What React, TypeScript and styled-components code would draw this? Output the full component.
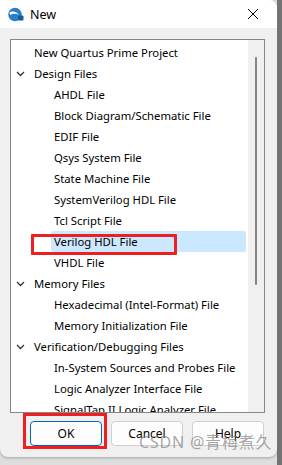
import React from "react";
import styled, { createGlobalStyle } from "styled-components";

const Global = createGlobalStyle`
  html, body { margin: 0; padding: 0; }
  body { background: #dedede; font-family: "Noto Sans", "Open Sans", sans-serif; }
`;

const Page = styled.div`
  display: flex;
  width: 282px;
  height: 465px;
  overflow: hidden;
  position: relative;
`;

const WindowCol = styled.div`
  display: flex;
  flex-direction: column;
  width: 277px;
  height: 465px;
`;

const Win = styled.div`
  display: flex;
  flex-direction: column;
  width: 277px;
  height: 457px;
  background: #f0f0f0;
  border-radius: 0 8px 8px 8px;
  overflow: hidden;
  box-shadow: 0 1px 3px rgba(0, 0, 0, 0.25);
`;

const RightStrip = styled.div`
  width: 5px;
  height: 465px;
  background: #737373;
`;

const TitleBar = styled.div`
  display: flex;
  align-items: center;
  height: 28px;
  background: #ffffff;
  padding: 0 0 0 7px;
`;

const TitleText = styled.span`
  margin-left: 6px;
  font-family: "Noto Sans", sans-serif;
  font-size: 12.5px;
  color: #000;
  flex: 1;
`;

const CloseBtn = styled.div`
  width: 40px;
  display: flex;
  justify-content: center;
  align-items: center;
  margin-right: 4px;
`;

const Body = styled.div`
  display: flex;
  flex-direction: column;
  padding: 11px 12px 0 10px;
`;

const TreeBox = styled.div`
  display: flex;
  height: 372px;
  border: 1px solid #828790;
  background: #ffffff;
  overflow: hidden;
`;

const TreeList = styled.div`
  flex: 1;
  display: flex;
  flex-direction: column;
  padding-top: 2px;
`;

const Row = styled.div<{ $level: number; $selected?: boolean }>`
  display: flex;
  align-items: center;
  height: 21px;
  flex: none;
  padding-left: ${(p) => (p.$selected ? 3 : p.$level === 0 ? 3 : 43)}px;
  margin-left: ${(p) => (p.$selected ? 40 : 0)}px;
  margin-right: 2px;
  border-radius: 2px;
  background: ${(p) => (p.$selected ? "#cce8ff" : "transparent")};
  font-family: "Noto Sans", sans-serif;
  font-size: 11.3px;
  color: #000;
  white-space: nowrap;
  position: relative;
`;

const Chevron = styled.span`
  width: 20px;
  display: flex;
  align-items: center;
  justify-content: flex-start;
  padding-left: 2px;
  box-sizing: border-box;
  flex: none;
`;

const RedMark = styled.div`
  position: absolute;
  left: -20px;
  top: 3px;
  width: 140px;
  height: 15px;
  border: 3px solid #f01e1e;
  border-radius: 1px;
  pointer-events: none;
`;

const ScrollTrack = styled.div`
  width: 16px;
  flex: none;
  background: #f0f0f0;
  display: flex;
  justify-content: center;
  padding-top: 17px;
`;

const Thumb = styled.div`
  width: 2px;
  height: 228px;
  background: #858585;
  border-radius: 1px;
`;

const ButtonRow = styled.div`
  display: flex;
  gap: 9px;
  padding: 8px 0 0 20px;
`;

const RedFrame = styled.div`
  display: flex;
  border: 3px solid #f01e1e;
  padding: 5px 2px 0 4px;
  margin: -8px -5px -3px -7px;
`;

const Button = styled.button<{ $primary?: boolean }>`
  width: 72px;
  height: 25px;
  box-sizing: border-box;
  border-radius: 4px;
  border: 1px solid ${(p) => (p.$primary ? "#0067c0" : "#d0d0d0")};
  background: #fdfdfd;
  font-family: "Noto Sans", sans-serif;
  font-size: 12px;
  color: #000;
  padding: 0;
  flex: none;
`;

const Watermark = styled.div`
  position: absolute;
  left: 139px;
  top: 429px;
  font-family: "Noto Sans", "Noto Sans CJK SC", sans-serif;
  font-size: 16px;
  letter-spacing: 0.8px;
  color: rgba(130, 130, 130, 0.7);
  pointer-events: none;
  white-space: nowrap;
`;

const ChevronIcon = () => (
  <svg width="9" height="6" viewBox="0 0 9 6">
    <path d="M1 1 L4.5 4.5 L8 1" fill="none" stroke="#333" strokeWidth="1.3" />
  </svg>
);

const QuartusIcon = () => (
  <svg width="17" height="15" viewBox="0 0 17 15">
    <circle cx="8" cy="7.5" r="6.8" fill="#2a7fc6" />
    <path d="M2.5 5.5 C5 3.5, 10 4.5, 12 8 C10 6.5, 6 6, 3 8 Z" fill="#ffffff" />
    <rect x="11" y="8.5" width="5.5" height="5" rx="1" fill="#1b5a9a" />
  </svg>
);

type Item = { label: string; level: number; group?: boolean; selected?: boolean };

const items: Item[] = [
  { label: "New Quartus Prime Project", level: 0 },
  { label: "Design Files", level: 0, group: true },
  { label: "AHDL File", level: 1 },
  { label: "Block Diagram/Schematic File", level: 1 },
  { label: "EDIF File", level: 1 },
  { label: "Qsys System File", level: 1 },
  { label: "State Machine File", level: 1 },
  { label: "SystemVerilog HDL File", level: 1 },
  { label: "Tcl Script File", level: 1 },
  { label: "Verilog HDL File", level: 1, selected: true },
  { label: "VHDL File", level: 1 },
  { label: "Memory Files", level: 0, group: true },
  { label: "Hexadecimal (Intel-Format) File", level: 1 },
  { label: "Memory Initialization File", level: 1 },
  { label: "Verification/Debugging Files", level: 0, group: true },
  { label: "In-System Sources and Probes File", level: 1 },
  { label: "Logic Analyzer Interface File", level: 1 },
  { label: "SignalTap II Logic Analyzer File", level: 1 },
];

export default function App() {
  return (
    <>
      <Global />
      <Page>
        <WindowCol>
          <Win>
            <TitleBar>
              <QuartusIcon />
              <TitleText>New</TitleText>
              <CloseBtn>
                <svg width="12" height="12" viewBox="0 0 12 12">
                  <path d="M1 1 L11 11 M11 1 L1 11" stroke="#000" strokeWidth="1" />
                </svg>
              </CloseBtn>
            </TitleBar>
            <Body>
              <TreeBox>
                <TreeList>
                  {items.map((it) => (
                    <Row key={it.label} $level={it.level} $selected={it.selected}>
                      {it.level === 0 && (
                        <Chevron>{it.group ? <ChevronIcon /> : null}</Chevron>
                      )}
                      {it.label}
                      {it.selected && <RedMark />}
                    </Row>
                  ))}
                </TreeList>
                <ScrollTrack>
                  <Thumb />
                </ScrollTrack>
              </TreeBox>
              <ButtonRow>
                <RedFrame>
                  <Button $primary>OK</Button>
                </RedFrame>
                <Button>Cancel</Button>
                <Button>Help</Button>
              </ButtonRow>
            </Body>
          </Win>
        </WindowCol>
        <RightStrip />
        <Watermark>CSDN @青梅煮久</Watermark>
      </Page>
    </>
  );
}
